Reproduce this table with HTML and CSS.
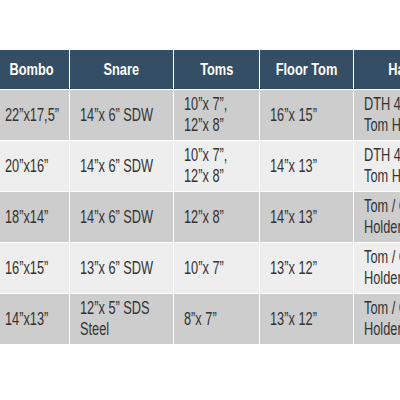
FILE: index.html
```html
<!DOCTYPE html>
<html>
<head>
<meta charset="utf-8">
<link rel="stylesheet" href="styles.css">
</head>
<body>
<div class="wrap">
<table class="kits">
<colgroup>
<col class="c1"><col class="c2"><col class="c3"><col class="c4"><col class="c5">
</colgroup>
<thead>
<tr><th><span class="h">Bombo</span></th><th><span class="h">Snare</span></th><th><span class="h">Toms</span></th><th><span class="h">Floor Tom</span></th><th><span class="h">Hardware</span></th></tr>
</thead>
<tbody>
<tr class="odd"><td><span class="t">22”x17,5”</span></td><td><span class="t">14”x 6” SDW</span></td><td><span class="t">10”x 7”,<br>12”x 8”</span></td><td><span class="t">16”x 15”</span></td><td><span class="t">DTH 400<br>Tom Holder</span></td></tr>
<tr class="even"><td><span class="t">20”x16”</span></td><td><span class="t">14”x 6” SDW</span></td><td><span class="t">10”x 7”,<br>12”x 8”</span></td><td><span class="t">14”x 13”</span></td><td><span class="t">DTH 400<br>Tom Holder</span></td></tr>
<tr class="odd"><td><span class="t">18”x14”</span></td><td><span class="t">14”x 6” SDW</span></td><td><span class="t">12”x 8”</span></td><td><span class="t">14”x 13”</span></td><td><span class="t">Tom / Cymbal<br>Holder</span></td></tr>
<tr class="even"><td><span class="t">16”x15”</span></td><td><span class="t">13”x 6” SDW</span></td><td><span class="t">10”x 7”</span></td><td><span class="t">13”x 12”</span></td><td><span class="t">Tom / Cymbal<br>Holder</span></td></tr>
<tr class="odd"><td><span class="t">14”x13”</span></td><td><span class="t">12”x 5” SDS<br>Steel</span></td><td><span class="t">8”x 7”</span></td><td><span class="t">13”x 12”</span></td><td><span class="t">Tom / Cymbal<br>Holder</span></td></tr>
</tbody>
</table>
</div>
</body>
</html>
```
FILE: styles.css
```css
html, body {
  margin: 0;
  padding: 0;
  background: #ffffff;
  overflow: hidden;
}
.wrap {
  padding-top: 50px;
  width: 400px;
  overflow: hidden;
}
.kits {
  margin-left: -6px;
  border-collapse: collapse;
  table-layout: fixed;
  width: 486px;
  font-family: "Liberation Sans", Arial, sans-serif;
}
.c1 { width: 75px; }
.c2 { width: 104px; }
.c3 { width: 86px; }
.c4 { width: 94px; }
.c5 { width: 127px; }
.kits th {
  background: #344e66;
  color: #ffffff;
  font-weight: bold;
  font-size: 16px;
  height: 39px;
  padding: 0;
  text-align: center;
  border: 1px solid #ffffff;
  border-top: none;
  white-space: nowrap;
}
.kits td {
  color: #333333;
  font-size: 18px;
  line-height: 21px;
  height: 42px;
  padding: 4px 10px;
  text-align: left;
  vertical-align: middle;
  border: 1px solid #ffffff;
  white-space: nowrap;
}
.h {
  display: inline-block;
  transform: scaleX(0.8);
  transform-origin: center;
}
.t {
  display: inline-block;
  transform: scaleX(0.71);
  transform-origin: left center;
}
.odd td { background: #cdcdcd; }
.even td { background: #eeeeee; }
```
